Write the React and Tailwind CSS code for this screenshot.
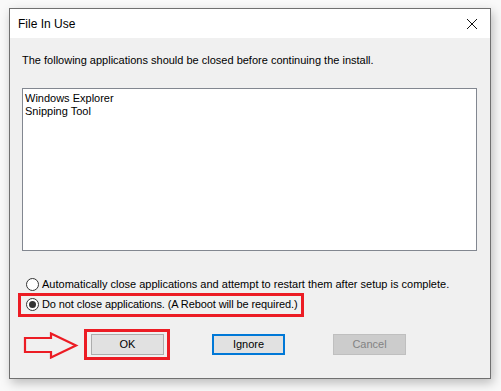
import React from "react";

const font = { fontFamily: '"Liberation Sans", Arial, sans-serif' };

const Radio = ({ checked }) => (
  <span className="w-[13px] h-[13px] rounded-full border border-[#333333] bg-white flex items-center justify-center shrink-0">
    {checked && <span className="w-[7px] h-[7px] rounded-full bg-[#333333]" />}
  </span>
);

const App = () => {
  return (
    <div className="w-[501px] h-[391px] bg-[#f9f9f9] pt-[8px] pl-[9px] text-[11px] text-black" style={font}>
      <div className="w-[482px] h-[371px] border border-[#707070] bg-[#f0f0f0] flex flex-col shadow-[2px_4px_10px_rgba(0,0,0,0.25)]">
        {/* Title bar */}
        <div className="h-[29px] bg-white flex items-center justify-between pl-[8px] pr-[11px] shrink-0">
          <span className="text-[12px]">File In Use</span>
          <svg width="12" height="12" viewBox="0 0 12 12" className="mr-[1px]">
            <path d="M1 1 L11 11 M11 1 L1 11" stroke="#111" strokeWidth="1" />
          </svg>
        </div>

        <div className="flex flex-col px-[12px] pt-[14px]">
          <p className="leading-[16px] whitespace-nowrap">The following applications should be closed before continuing the install.</p>

          {/* Listbox */}
          <div className="mt-[20px] w-[455px] h-[163px] bg-white border border-[#828790] pl-[2px] pt-[3px] leading-[13px]">
            <div>Windows Explorer</div>
            <div>Snipping Tool</div>
          </div>

          {/* Options */}
          <div className="mt-[26px] flex items-center gap-[3px] ml-[4px] h-[14px] whitespace-nowrap">
            <Radio />
            <span>Automatically close applications and attempt to restart them after setup is complete.</span>
          </div>
          <div className="relative mt-[6px] flex items-center gap-[3px] ml-[4px] h-[14px] whitespace-nowrap">
            <Radio checked />
            <span className="tracking-[-0.1px]">Do not close applications. (A Reboot will be required.)</span>
            <div className="absolute left-[-8px] top-[-4px] w-[286px] h-[24px] border-[3px] border-[#ec1c24]" />
          </div>

          {/* Buttons */}
          <div className="relative mt-[23px] flex items-center pl-[69px] gap-[48px]">
            <svg width="56" height="27" viewBox="0 0 56 27" className="absolute left-[1px] top-[-2px]">
              <path d="M2 6 L28 6 L28 1.5 L53 13.5 L28 25.5 L28 20 L2 20 Z" fill="none" stroke="#ec1c24" strokeWidth="2.2" strokeLinejoin="miter" />
            </svg>
            <div className="relative">
              <button className="w-[73px] h-[21px] bg-[#e1e1e1] border border-[#adadad] flex items-center justify-center">OK</button>
              <div className="absolute left-[-7px] top-[-5px] w-[86px] h-[31px] border-[3px] border-[#ec1c24]" />
            </div>
            <button className="w-[73px] h-[21px] bg-[#e1e1e1] border-2 border-[#0078d7] flex items-center justify-center">Ignore</button>
            <button className="w-[73px] h-[21px] bg-[#cccccc] border border-[#bfbfbf] text-[#838383] flex items-center justify-center">Cancel</button>
          </div>
        </div>
      </div>
    </div>
  );
};

export default App;
